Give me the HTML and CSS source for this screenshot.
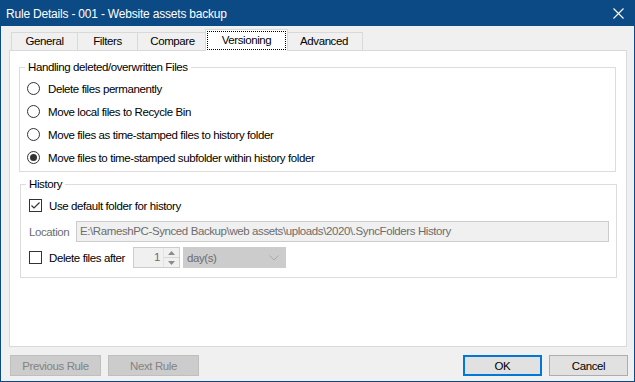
FILE: index.html
```html
<!DOCTYPE html>
<html lang="en">
<head>
    <meta charset="UTF-8">
    <title>Rule Details - 001 - Website assets backup</title>
    <link rel="stylesheet" href="styles.css">
</head>
<body>

<div class="window">
    <!-- Barra del titolo -->
    <div class="titlebar">
        <span class="title">Rule Details - 001 - Website assets backup</span>
        <svg class="close" width="11" height="11" viewBox="0 0 11 11">
            <path d="M0.5 0.5L10.5 10.5M10.5 0.5L0.5 10.5" stroke="#fff" stroke-width="1.1" fill="none"/>
        </svg>
    </div>

    <!-- Schede -->
    <div class="tabs">
        <div class="tab tab-general">General</div>
        <div class="tab tab-filters">Filters</div>
        <div class="tab tab-compare">Compare</div>
        <div class="tab tab-versioning selected"><span>Versioning</span></div>
        <div class="tab tab-advanced">Advanced</div>
    </div>

    <div class="panel">
        <fieldset class="group group-handling">
            <legend>Handling deleted/overwritten Files</legend>
            <div class="option"><span class="radio"></span>Delete files permanently</div>
            <div class="option"><span class="radio"></span>Move local files to Recycle Bin</div>
            <div class="option"><span class="radio"></span>Move files as time-stamped files to history folder</div>
            <div class="option"><span class="radio checked"></span>Move files to time-stamped subfolder within history folder</div>
        </fieldset>

        <fieldset class="group group-history">
            <legend>History</legend>
            <div class="row row-default">
                <span class="checkbox checked">
                    <svg width="11" height="11" viewBox="0 0 11 11"><path d="M1.5 5.5L4 8L9.5 2.5" stroke="#333" stroke-width="1.2" fill="none"/></svg>
                </span>
                Use default folder for history
            </div>
            <div class="row row-location">
                <span class="label-disabled">Location</span>
                <div class="textbox">E:\RameshPC-Synced Backup\web assets\uploads\2020\.SyncFolders History</div>
            </div>
            <div class="row row-delete">
                <div class="delete-label"><span class="checkbox"></span>Delete files after</div>
                <div class="spinbox">
                    <span class="spin-value">1</span>
                    <div class="spin-buttons">
                        <div class="spin-up"><svg width="7" height="4" viewBox="0 0 7 4"><path d="M0 4L3.5 0L7 4Z" fill="#8a8a8a"/></svg></div>
                        <div class="spin-down"><svg width="7" height="4" viewBox="0 0 7 4"><path d="M0 0L3.5 4L7 0Z" fill="#8a8a8a"/></svg></div>
                    </div>
                </div>
                <div class="combo">
                    <span>day(s)</span>
                    <svg width="10" height="6" viewBox="0 0 10 6"><path d="M0.5 0.5L5 5L9.5 0.5" stroke="#a8a8a8" stroke-width="1" fill="none"/></svg>
                </div>
            </div>
        </fieldset>
    </div>

    <!-- Pulsanti in basso -->
    <div class="footer">
        <button class="btn btn-wide" disabled>Previous Rule</button>
        <button class="btn btn-wide" disabled>Next Rule</button>
        <div class="spacer"></div>
        <button class="btn btn-default">OK</button>
        <button class="btn">Cancel</button>
    </div>
</div>

</body>
</html>
```

FILE: styles.css
```css
/* Finestra di dialogo stile Windows */
body {
    margin: 0;
    font-family: "Liberation Sans", Arial, sans-serif;
    font-size: 11.5px;
    letter-spacing: -0.4px;
    color: #000;
}

.window {
    width: 635px;
    height: 382px;
    box-sizing: border-box;
    border: 1px solid #0b4a84;
    background-color: #f0f0f0;
    display: flex;
    flex-direction: column;
}

.titlebar {
    height: 25px;
    flex-shrink: 0;
    background-color: #0b4a84;
    color: #fff;
    display: flex;
    align-items: center;
    padding-left: 5px;
    font-size: 12px;
    letter-spacing: -0.2px;
}

.title {
    flex: 1;
}

.close {
    margin-right: 10px;
}

/* Schede */
.tabs {
    display: flex;
    align-items: flex-end;
    height: 24px;
    padding-left: 10px;
    flex-shrink: 0;
}

.tab {
    box-sizing: border-box;
    height: 18px;
    border: 1px solid #d9d9d9;
    border-bottom: none;
    margin-left: -1px;
    text-align: center;
    line-height: 17px;
    background-color: #f0f0f0;
}

.tab-general {
    width: 67px;
    margin-left: 0;
}

.tab-filters {
    width: 61px;
}

.tab-compare {
    width: 71px;
}

.tab-advanced {
    width: 78px;
}

.tab.selected {
    width: 83px;
    height: 22px;
    margin-left: -3px;
    margin-right: -2px;
    margin-bottom: -1px;
    background-color: #fff;
    position: relative;
    z-index: 1;
    padding: 2px 2px 0;
    line-height: 16px;
}

.tab.selected span {
    display: block;
    outline: 1px dotted #000;
    height: 17px;
}

/* Pannello */
.panel {
    box-sizing: border-box;
    height: 297px;
    width: 618px;
    margin-left: 8px;
    border: 1px solid #d9d9d9;
    background-color: #fff;
    flex-shrink: 0;
    display: flex;
    flex-direction: column;
}

.group {
    border: 1px solid #dcdcdc;
    margin: 0;
    min-width: 0;
}

.group legend {
    line-height: 15px;
    padding: 0 3px;
}

.group-handling {
    margin: 9px 10px 0 9px;
    padding: 2px 7px 2px 7px;
}

.group-handling legend {
    margin-left: -2px;
}

.option {
    height: 23px;
    display: flex;
    align-items: center;
}

.radio {
    box-sizing: border-box;
    width: 13px;
    height: 13px;
    border: 1px solid #333;
    border-radius: 50%;
    margin-right: 8px;
    display: flex;
    align-items: center;
    justify-content: center;
}

.radio.checked::after {
    content: "";
    width: 7px;
    height: 7px;
    border-radius: 50%;
    background-color: #333;
}

.group-history {
    margin: 5px 9px 0 10px;
    padding: 2px 7px 9px 8px;
}

.group-history legend {
    margin-left: -3px;
}

.row {
    display: flex;
    align-items: center;
    white-space: nowrap;
}

.row-default {
    height: 23px;
}

.row-location {
    height: 21px;
    margin-top: 4px;
}

.row-delete {
    height: 21px;
    margin-top: 5px;
}

.checkbox {
    box-sizing: border-box;
    width: 13px;
    height: 13px;
    border: 1px solid #333;
    margin-right: 7px;
    display: flex;
    align-items: center;
    justify-content: center;
    flex-shrink: 0;
}

.label-disabled {
    color: #6d6d6d;
    width: 47px;
}

.textbox {
    flex: 1;
    box-sizing: border-box;
    height: 21px;
    border: 1px solid #cccccc;
    background-color: #f0f0f0;
    color: #6d6d6d;
    padding-left: 3px;
    line-height: 19px;
    overflow: hidden;
}

.delete-label {
    width: 104px;
    display: flex;
    align-items: center;
}

.spinbox {
    box-sizing: border-box;
    width: 47px;
    height: 21px;
    border: 1px solid #cccccc;
    background-color: #f0f0f0;
    display: flex;
}

.spin-value {
    flex: 1;
    text-align: right;
    color: #6d6d6d;
    line-height: 19px;
    padding-right: 3px;
}

.spin-buttons {
    width: 15px;
    display: flex;
    flex-direction: column;
    border-left: 1px solid #e3e3e3;
}

.spin-up,
.spin-down {
    flex: 1;
    display: flex;
    align-items: center;
    justify-content: center;
}

.spin-up {
    border-bottom: 1px solid #d6d6d6;
}

.combo {
    box-sizing: border-box;
    width: 103px;
    height: 21px;
    margin-left: 3px;
    background-color: #cccccc;
    border: 1px solid #cccccc;
    color: #6d6d6d;
    display: flex;
    align-items: center;
    justify-content: space-between;
    padding: 0 6px 0 3px;
}

/* Pulsanti */
.footer {
    display: flex;
    gap: 7px;
    padding: 8px 6px 0 9px;
}

.spacer {
    flex: 1;
}

.btn {
    box-sizing: border-box;
    width: 79px;
    height: 21px;
    border: 1px solid #adadad;
    background-color: #e1e1e1;
    font-family: inherit;
    font-size: 11.5px;
    letter-spacing: -0.4px;
    color: #000;
    padding: 0;
}

.btn-wide {
    width: 91px;
}

.btn:disabled {
    background-color: #cccccc;
    border-color: #bfbfbf;
    color: #838383;
}

.btn-default {
    border: 2px solid #0078d7;
}
```
